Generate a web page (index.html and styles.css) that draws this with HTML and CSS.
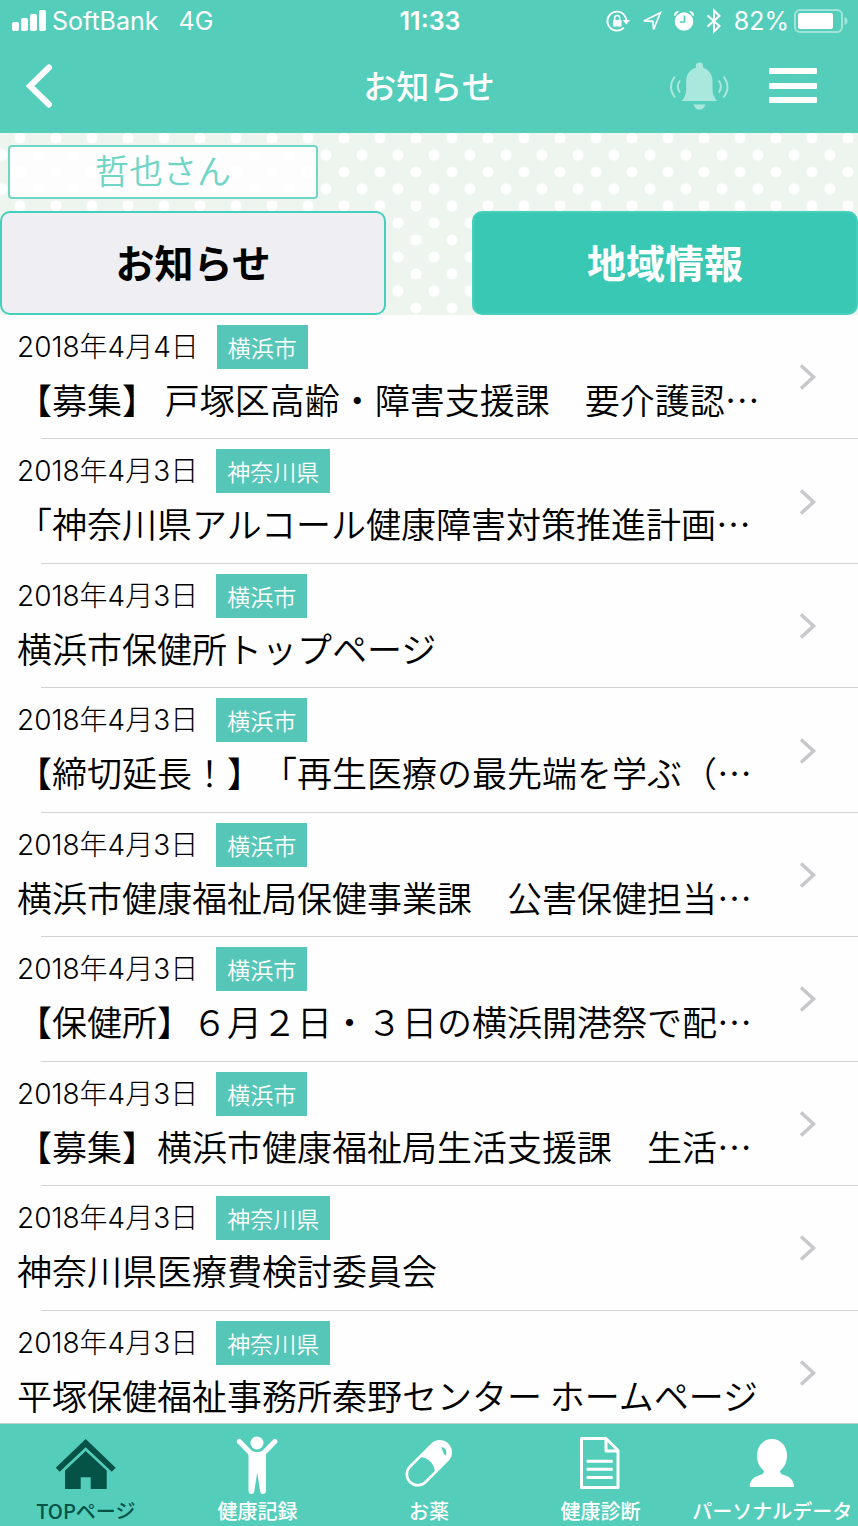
FILE: index.html
```html
<!DOCTYPE html>
<html lang="ja">

<head>
    <meta charset="UTF-8">
    <meta name="viewport" content="width=device-width, initial-scale=1.0">
    <title>お知らせ</title>
    <link rel="stylesheet" href="styles.css">
</head>

<body>
    <svg class="defs" aria-hidden="true">
        <symbol id="chevron" viewBox="0 0 18 28">
            <path d="M2 2.500L14.500 14L2 25.500" fill="none" stroke="#c7c7cc" stroke-width="3.500" />
        </symbol>
    </svg>

    <header class="header">
        <div class="status">
            <div class="status-left">
                <svg width="35" height="22" viewBox="0 0 35 22" fill="#fff">
                    <rect x="0" y="12" width="7" height="9" rx="2" />
                    <rect x="9" y="8" width="7" height="13" rx="2" />
                    <rect x="18" y="4" width="7" height="17" rx="2" />
                    <rect x="27" y="0" width="7" height="21" rx="2" />
                </svg>
                <span class="carrier">SoftBank</span>
                <span>4G</span>
            </div>
            <span class="clock">11:33</span>
            <div class="status-right">
                <!-- 画面ロック -->
                <svg width="24" height="26" viewBox="0 0 24 26">
                    <path d="M18.600 7.500A9.500 9.500 0 1 0 17.800 19.600" fill="none" stroke="#fff" stroke-width="1.800" />
                    <path d="M18.600 7.500Q20.300 10 20.500 13" fill="none" stroke="#fff" stroke-width="1.800" />
                    <path d="M16.500 12H24L20.300 16.500Z" fill="#fff" />
                    <rect x="7" y="12" width="8.500" height="6.500" rx="0.500" fill="#fff" />
                    <path d="M8.700 12.500V10a2.500 2.500 0 0 1 5 0V12.500" fill="none" stroke="#fff" stroke-width="1.400" />
                </svg>
                <!-- 位置情報 -->
                <svg width="20" height="26" viewBox="0 0 20 26">
                    <path d="M1.800 12.900L18.300 4.700L11.600 21.500L10.900 13.300Z" fill="none" stroke="#fff" stroke-width="1.700" />
                </svg>
                <!-- アラーム -->
                <svg width="20" height="26" viewBox="0 0 20 26">
                    <circle cx="10" cy="13.500" r="9.300" fill="#fff" />
                    <path d="M1 8Q-0.500 4 4.500 3.500M19 8Q20.500 4 15.500 3.500" fill="#fff" stroke="#fff" stroke-width="1" />
                    <path d="M10.500 7.500V14H6" fill="none" stroke="#54cebb" stroke-width="1.600" />
                </svg>
                <!-- Bluetooth -->
                <svg width="16" height="26" viewBox="0 0 16 26">
                    <path d="M1.500 7.500L13.500 18L8 23.500V2.500L13.500 8L1.500 18.500" fill="none" stroke="#fff" stroke-width="2" />
                </svg>
                <div class="battery">
                    <span>82%</span>
                    <svg width="54" height="24" viewBox="0 0 54 24">
                        <rect x="1" y="1" width="47" height="22" rx="5" fill="none" stroke="#fff" stroke-opacity="0.450" stroke-width="2" />
                        <rect x="4" y="4" width="35" height="16" rx="2" fill="#fff" />
                        <path d="M50.500 8Q53.500 9 53.500 12T50.500 16Z" fill="#fff" fill-opacity="0.450" />
                    </svg>
                </div>
            </div>
        </div>

        <div class="nav">
            <button class="icon-btn back" type="button" aria-label="戻る">
                <svg width="30" height="46" viewBox="0 0 30 46">
                    <path d="M25 4.500L6 23L25 41.500" fill="none" stroke="#fff" stroke-width="6" stroke-linecap="round" stroke-linejoin="miter" />
                </svg>
            </button>
            <h1 class="nav-title">お知らせ</h1>
            <div class="nav-right">
                <button class="icon-btn" type="button" aria-label="通知">
                    <svg class="bell" width="60" height="50" viewBox="0 0 60 50">
                        <path d="M30.500 1.500a3.700 3.700 0 0 1 3.700 3.700v1.500C40 8.500 43.500 13.500 43.500 20v8C43.500 33 45 36.500 48 40H12.700c3-3.500 4.500-7 4.500-12v-8c0-6.500 3.500-11.500 9.600-13.300V5.200a3.700 3.700 0 0 1 3.700-3.700z" />
                        <path d="M24.500 43.500H36.500Q34.500 48.800 30.500 48.800T24.500 43.500Z" />
                        <path class="wave" d="M11 19.500Q6.500 25.500 11 31.500M6 15.500Q-2 26 6 36.300M49.700 19.500Q54.200 25.500 49.700 31.500M54.500 15.500Q62.500 26 54.500 36.300" />
                    </svg>
                </button>
                <button class="icon-btn" type="button" aria-label="メニュー">
                    <svg width="48" height="36" viewBox="0 0 48 36" fill="#fff">
                        <rect y="0" width="48" height="6" rx="1" />
                        <rect y="15" width="48" height="6" rx="1" />
                        <rect y="29" width="48" height="6" rx="1" />
                    </svg>
                </button>
            </div>
        </div>
    </header>

    <section class="top">
        <div class="user-name">哲也さん</div>
        <div class="switch">
            <button class="switch-btn" type="button">お知らせ</button>
            <button class="switch-btn active" type="button">地域情報</button>
        </div>
    </section>

    <main class="news">
        <ul class="news-list">
            <li class="news-item">
                <a class="news-link" href="#">
                    <div class="news-body">
                        <div class="news-head"><time class="date">2018年4月4日</time><span class="tag">横浜市</span></div>
                        <p class="news-title">【募集】 戸塚区高齢・障害支援課　要介護認…</p>
                    </div>
                    <svg class="chevron" width="18" height="28"><use href="#chevron" /></svg>
                </a>
            </li>
            <li class="news-item">
                <a class="news-link" href="#">
                    <div class="news-body">
                        <div class="news-head"><time class="date">2018年4月3日</time><span class="tag">神奈川県</span></div>
                        <p class="news-title">「神奈川県アルコール健康障害対策推進計画…</p>
                    </div>
                    <svg class="chevron" width="18" height="28"><use href="#chevron" /></svg>
                </a>
            </li>
            <li class="news-item">
                <a class="news-link" href="#">
                    <div class="news-body">
                        <div class="news-head"><time class="date">2018年4月3日</time><span class="tag">横浜市</span></div>
                        <p class="news-title">横浜市保健所トップページ</p>
                    </div>
                    <svg class="chevron" width="18" height="28"><use href="#chevron" /></svg>
                </a>
            </li>
            <li class="news-item">
                <a class="news-link" href="#">
                    <div class="news-body">
                        <div class="news-head"><time class="date">2018年4月3日</time><span class="tag">横浜市</span></div>
                        <p class="news-title">【締切延長！】「再生医療の最先端を学ぶ（…</p>
                    </div>
                    <svg class="chevron" width="18" height="28"><use href="#chevron" /></svg>
                </a>
            </li>
            <li class="news-item">
                <a class="news-link" href="#">
                    <div class="news-body">
                        <div class="news-head"><time class="date">2018年4月3日</time><span class="tag">横浜市</span></div>
                        <p class="news-title">横浜市健康福祉局保健事業課　公害保健担当…</p>
                    </div>
                    <svg class="chevron" width="18" height="28"><use href="#chevron" /></svg>
                </a>
            </li>
            <li class="news-item">
                <a class="news-link" href="#">
                    <div class="news-body">
                        <div class="news-head"><time class="date">2018年4月3日</time><span class="tag">横浜市</span></div>
                        <p class="news-title">【保健所】６月２日・３日の横浜開港祭で配…</p>
                    </div>
                    <svg class="chevron" width="18" height="28"><use href="#chevron" /></svg>
                </a>
            </li>
            <li class="news-item">
                <a class="news-link" href="#">
                    <div class="news-body">
                        <div class="news-head"><time class="date">2018年4月3日</time><span class="tag">横浜市</span></div>
                        <p class="news-title">【募集】横浜市健康福祉局生活支援課　生活…</p>
                    </div>
                    <svg class="chevron" width="18" height="28"><use href="#chevron" /></svg>
                </a>
            </li>
            <li class="news-item">
                <a class="news-link" href="#">
                    <div class="news-body">
                        <div class="news-head"><time class="date">2018年4月3日</time><span class="tag">神奈川県</span></div>
                        <p class="news-title">神奈川県医療費検討委員会</p>
                    </div>
                    <svg class="chevron" width="18" height="28"><use href="#chevron" /></svg>
                </a>
            </li>
            <li class="news-item">
                <a class="news-link" href="#">
                    <div class="news-body">
                        <div class="news-head"><time class="date">2018年4月3日</time><span class="tag">神奈川県</span></div>
                        <p class="news-title">平塚保健福祉事務所秦野センター ホームページ</p>
                    </div>
                    <svg class="chevron" width="18" height="28"><use href="#chevron" /></svg>
                </a>
            </li>
        </ul>
    </main>

    <nav class="tabbar">
        <a class="tab current" href="#">
            <svg width="62" height="60" viewBox="0 0 62 60" fill="#055247">
                <path d="M30.700 4L60.700 32.700L56.700 36.700L30.700 12.300L4.700 36.700L0.700 32.700Z" />
                <path d="M30.700 16L51.700 35.500V54H35.700V42.300H25.700V54H10V35.500Z" />
            </svg>
            <span>TOPページ</span>
        </a>
        <a class="tab" href="#">
            <svg width="62" height="60" viewBox="0 0 62 60" fill="#fff">
                <circle cx="31" cy="8" r="6.500" />
                <path d="M13.300 6.500L25 18.500M48.900 6.500L37.200 18.500" stroke="#fff" stroke-width="5" stroke-linecap="round" />
                <path d="M22.500 17L25 15.500Q31 18.500 37 15.500L40 17V55.500Q39.700 59 37 59Q34.300 59 34 55.500L31.200 37.500L28.400 55.500Q28 59 25.200 59Q22.700 59 22.500 55.500Z" />
            </svg>
            <span>健康記録</span>
        </a>
        <a class="tab" href="#">
            <svg width="62" height="60" viewBox="0 0 62 60">
                <g transform="translate(30.800 28.300) rotate(-45)">
                    <rect x="-26.500" y="-11" width="53" height="22" rx="11" fill="none" stroke="#fff" stroke-width="2.600" />
                    <path d="M-3 -11C4 -7 4 7 -3 11H15.500a11 11 0 0 0 0-22Z" fill="#fff" />
                </g>
                <path d="M43.500 12Q50 13.500 47.800 20.800Q45 19 43.500 12Z" fill="#54cebb" />
            </svg>
            <span>お薬</span>
        </a>
        <a class="tab" href="#">
            <svg width="62" height="60" viewBox="0 0 62 60" fill="none" stroke="#fff" stroke-width="3" stroke-linejoin="round">
                <path d="M11.500 3.500H36L48 15.500V52.500H11.500Z" />
                <path d="M36 3.500V16H48M16.700 26.300H42.700M16.700 34.300H42.700M16.700 42.500H42.700" />
            </svg>
            <span>健康診断</span>
        </a>
        <a class="tab" href="#">
            <svg width="62" height="60" viewBox="0 0 62 60" fill="#fff">
                <path d="M31 4C39.500 4 46 11 46 20.500C46 27 43.500 32 39.500 35.500Q38 37.500 41 39.500C47 41 53 43.500 53 52H8.700C8.700 43.500 15 41 21 39.500Q24 37.500 22.500 35.500C18.500 32 16 27 16 20.500C16 11 22.500 4 31 4Z" />
            </svg>
            <span>パーソナルデータ</span>
        </a>
    </nav>
</body>

</html>
```

FILE: styles.css
```css
* {
    padding: 0;
    margin: 0;
    box-sizing: border-box;
}

body {
    display: flex;
    flex-direction: column;
    height: 100vh;
    background-color: #fefefe;
    color: #000;
    font-family: "Noto Sans CJK JP", sans-serif;
    text-spacing-trim: space-all;
}

svg {
    display: block;
    flex-shrink: 0;
}

a {
    color: inherit;
    text-decoration: none;
}

button {
    font-family: inherit;
    cursor: pointer;
}

.defs {
    position: absolute;
    width: 0;
    height: 0;
}

/* ヘッダー */
.header {
    background-color: #54cebb;
    color: #fff;
}

.status {
    display: grid;
    grid-template-columns: 1fr auto 1fr;
    align-items: center;
    height: 42px;
    padding: 0 10px 0 12px;
    font-family: Inter, sans-serif;
    font-size: 25px;
    line-height: 30px;
}

.status-left,
.status-right {
    display: flex;
    align-items: center;
}

.carrier {
    margin: 0 20px 0 5px;
}

.clock {
    font-weight: 600;
}

.status-right {
    justify-content: flex-end;
    gap: 12px;
}

.battery {
    display: flex;
    align-items: center;
    gap: 5px;
}

.nav {
    display: grid;
    grid-template-columns: 1fr auto 1fr;
    align-items: center;
    height: 91px;
    padding: 0 24px 3px;
}

.icon-btn {
    border: none;
    background: none;
}

.back {
    justify-self: start;
}

.nav-title {
    padding-bottom: 3px;
    font-size: 33px;
    font-weight: 500;
    line-height: 48px;
}

.nav-right {
    display: flex;
    align-items: center;
    justify-content: flex-end;
    gap: 40px;
    padding-right: 17px;
}

.bell {
    fill: #aae7dd;
}

.wave {
    fill: none;
    stroke: #aae7dd;
    stroke-width: 2;
}

/* 水玉の背景 */
.top {
    padding-top: 12px;
    background-color: #edf5ee;
    background-image: radial-gradient(circle, #fff 5px, transparent 6px), radial-gradient(circle, #fff 5px, transparent 6px);
    background-size: 36px 34px;
    background-position: 2px -12px, 20px 5px;
}

.user-name {
    width: 310px;
    margin: 0 0 12px 8px;
    padding-bottom: 4px;
    border: 2px solid #6fd5c5;
    border-radius: 4px;
    background-color: rgba(255, 255, 255, 0.8);
    color: #6fd5c5;
    font-size: 34px;
    font-weight: 350;
    line-height: 46px;
    text-align: center;
}

.switch {
    display: flex;
    justify-content: space-between;
}

.switch-btn {
    width: 45%;
    height: 104px;
    padding-bottom: 4px;
    border: 2px solid #45cfbd;
    border-radius: 10px;
    background-color: #efeef3;
    color: #000;
    font-size: 39px;
    font-weight: 700;
}

.switch-btn.active {
    background-color: #38c8b3;
    color: #fff;
}

/* 一覧 */
.news {
    display: flex;
    flex: 1;
    flex-direction: column;
    min-height: 0;
    overflow: hidden;
}

.news-list {
    display: grid;
    flex: 1;
    grid-auto-rows: 1fr;
    margin-bottom: -12px;
    list-style: none;
}

.news-item {
    background: linear-gradient(#d2d2d4, #d2d2d4) right bottom / calc(100% - 41px) 1px no-repeat;
}

.news-link {
    display: flex;
    align-items: center;
    height: 100%;
    padding: 0 41px 0 17px;
}

.news-body {
    flex: 1;
    align-self: flex-start;
    min-width: 0;
    padding-top: 10px;
}

.news-head {
    display: flex;
    align-items: center;
    gap: 18px;
}

.date {
    font-family: Inter, "Noto Sans CJK JP", sans-serif;
    font-size: 28px;
    font-weight: 300;
    line-height: 44px;
}

.tag {
    padding: 0 11px;
    background-color: #56c6b9;
    color: #fff;
    font-size: 23px;
    font-weight: 350;
    line-height: 44px;
}

.news-title {
    margin-top: 5px;
    overflow: hidden;
    font-size: 35px;
    font-weight: 350;
    line-height: 50px;
    text-overflow: ellipsis;
    white-space: nowrap;
}

/* 下のタブ */
.tabbar {
    display: grid;
    grid-template-columns: repeat(5, 1fr);
    border-top: 1px solid #c5cfce;
    background-color: #54cebb;
    color: #fff;
}

.tab {
    display: flex;
    flex-direction: column;
    align-items: center;
    gap: 3px;
    padding: 11px 0 2px;
    font-size: 20px;
    font-weight: 500;
    line-height: 26px;
    white-space: nowrap;
}

.tab.current {
    color: #055247;
}
```
